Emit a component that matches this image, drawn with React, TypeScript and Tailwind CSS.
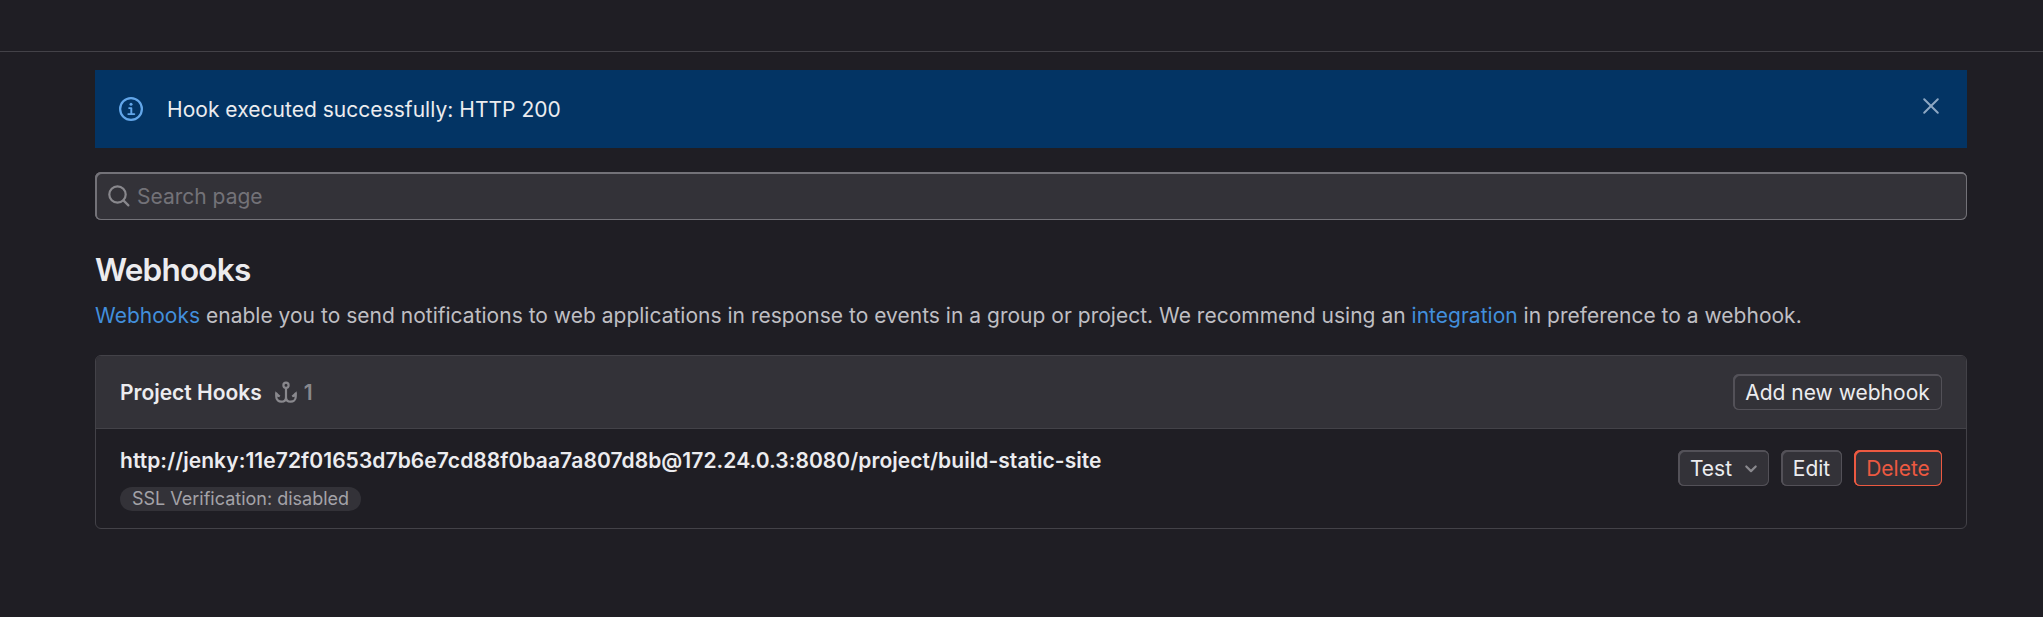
import type { ReactNode } from "react";

function InfoIcon() {
  return (
    <svg viewBox="0 0 16 16" fill="none" stroke="currentColor" strokeWidth="1.5" strokeLinecap="round" strokeLinejoin="round" className="size-6 shrink-0 text-[#63a6e9]">
      <circle cx="8" cy="8" r="7.25" />
      <path d="M6.75 7.4H8.2v4M6.2 11.4h4" strokeWidth="1.3" />
      <circle cx="8" cy="4.9" r="1" fill="currentColor" stroke="none" />
    </svg>
  );
}

function CloseIcon() {
  return (
    <svg viewBox="0 0 24 24" fill="none" stroke="currentColor" strokeWidth="2" strokeLinecap="round" className="size-6">
      <path d="M5.2 5.2l13.6 13.6M18.8 5.2L5.2 18.8" />
    </svg>
  );
}

function SearchIcon() {
  return (
    <svg viewBox="0 0 24 24" fill="none" stroke="currentColor" strokeWidth="2.2" strokeLinecap="round" className="size-6 shrink-0 text-[#89888d]">
      <circle cx="10.5" cy="10.5" r="8.2" />
      <path d="M16.4 16.4l5 5" />
    </svg>
  );
}

function HookIcon() {
  return (
    <svg viewBox="0 0 24 24" fill="none" stroke="currentColor" strokeWidth="2.2" className="size-6 shrink-0">
      <circle cx="12" cy="5.2" r="2.6" />
      <path d="M12 7.8v9.400c0 2.600-1.800 4.500-4.600 4.500S2.300 19.800 2.300 17v-4.200M12 17.200c0 2.600 1.800 4.500 4.600 4.500s5.100-1.900 5.100-4.700v-4.200" />
      <path d="M1.200 11.200l5.200 4.600-1.200 1.400-3.500-1zM22.800 11.200l-5.200 4.600 1.200 1.400 3.500-1z" fill="currentColor" stroke="none" />
    </svg>
  );
}

function Button({ children, width, danger = false }: { children: ReactNode; width: string; danger?: boolean }) {
  const tone = danger
    ? "text-[#ec5941] shadow-[inset_1px_1px_0_1px_#ec5941,inset_0_0_0_1px_#ec5941]"
    : "text-[#ececef] shadow-[inset_1px_1px_0_1px_#535158,inset_0_0_0_1px_#535158]";
  return (
    <button className={`flex h-9 items-center justify-center rounded-[6px] bg-[#333238] pt-[2px] ${width} ${tone}`}>
      {children}
    </button>
  );
}

export default function App() {
  return (
    <div className="h-[617px] w-full overflow-hidden bg-[#1f1e24] font-['Inter',sans-serif] text-[21px] leading-[30px] whitespace-nowrap text-[#bfbfc3]">
      <header className="h-[52px] border-b border-[#434248]" />
      <main className="ml-[95px] w-[1872px] pt-[18px]">
        <div className="flex h-[78px] items-center bg-[#033464] px-6 text-[#ececef]">
          <InfoIcon />
          <span className="ml-6 pt-[2px] tracking-[0.03px]">Hook executed successfully: HTTP 200</span>
          <button aria-label="Dismiss" className="mb-[6px] ml-auto text-[#8da7c3]">
            <CloseIcon />
          </button>
        </div>

        <label className="mt-6 flex h-12 items-center rounded-[6px] bg-[#333238] pl-3 shadow-[inset_1px_1px_0_1px_#737278,inset_0_0_0_1px_#737278]">
          <SearchIcon />
          <input placeholder="Search page" className="ml-[6px] w-96 bg-transparent pt-[2px] outline-none placeholder:text-[#737278]" />
        </label>

        <h1 className="mt-[31px] text-[31.5px] leading-[38px] font-semibold tracking-[-0.025em] text-[#ececef]">Webhooks</h1>
        <p className="mt-[12px] tracking-[0.013px]">
          <a className="text-[#428fdc]">Webhooks</a> enable you to send notifications to web applications in response to
          events in a group or project. We recommend using an <a className="text-[#428fdc]">integration</a> in preference
          to a webhook.
        </p>

        <section className="mt-[24px] h-[174px] overflow-hidden rounded-[6px] border border-[#434248]">
          <div className="flex h-[73px] items-center border-b border-[#434248] bg-[#333238] px-6">
            <h2 className="pt-[2px] font-semibold text-[#ececef]">Project Hooks</h2>
            <span className="ml-3 flex items-center gap-[6px] font-semibold text-[#89888d]">
              <HookIcon />
              <span className="pt-[2px]">1</span>
            </span>
            <div className="ml-auto">
              <Button width="w-[209px]">Add new webhook</Button>
            </div>
          </div>
          <div className="flex justify-between px-6">
            <div className="pt-[17px]">
              <div className="font-semibold tracking-[0.06px] text-[#ececef]">
                http://jenky:11e72f01653d7b6e7cd88f0baa7a807d8b@172.24.0.3:8080/project/build-static-site
              </div>
              <div className="mt-[11px] flex h-6 w-[241px] items-center justify-center rounded-full bg-[#333238] text-[18px] leading-6 text-[#a4a3a8]">
                SSL Verification: disabled
              </div>
            </div>
            <div className="flex gap-3 pt-[21px]">
              <Button width="w-[91px]">
                Test
                <svg viewBox="0 0 24 24" fill="none" stroke="#89888d" strokeWidth="2.2" strokeLinecap="round" strokeLinejoin="round" className="mr-[-5px] ml-[6px] size-6">
                  <path d="M8.300 9.500l4.700 4.600 4.700-4.600" />
                </svg>
              </Button>
              <Button width="w-[61px]">Edit</Button>
              <Button width="w-[88px]" danger>Delete</Button>
            </div>
          </div>
        </section>
      </main>
    </div>
  );
}
